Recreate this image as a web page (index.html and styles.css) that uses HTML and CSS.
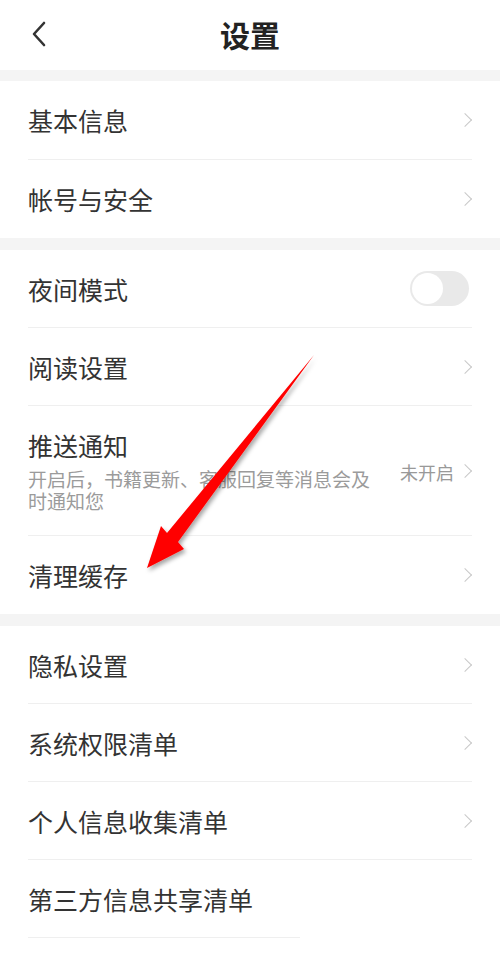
FILE: index.html
```html
<!DOCTYPE html>
<html lang="zh-CN">
<head>
<meta charset="utf-8">
<title>设置</title>
<link rel="stylesheet" href="styles.css">
</head>
<body>
<div class="page">
  <header class="topbar">
    <svg class="back" width="16" height="26" viewBox="0 0 16 26"><path d="M13 2 L3 13 L13 24" fill="none" stroke="#333" stroke-width="2.6" stroke-linecap="round" stroke-linejoin="round"/></svg>
    <h1 class="title">设置</h1>
  </header>

  <div class="gap first"></div>
  <section class="group">
    <div class="row top"><span class="label">基本信息</span><span class="chev"></span></div>
    <div class="row"><span class="label">帐号与安全</span><span class="chev"></span></div>
  </section>

  <div class="gap"></div>
  <section class="group">
    <div class="row"><span class="label">夜间模式</span><span class="toggle"><span class="knob"></span></span></div>
    <div class="row"><span class="label">阅读设置</span><span class="chev"></span></div>
    <div class="row tall">
      <div class="texts">
        <span class="label">推送通知</span>
        <span class="sub">开启后，书籍更新、客服回复等消息会及时通知您</span>
      </div>
      <span class="value">未开启</span><span class="chev"></span>
    </div>
    <div class="row"><span class="label">清理缓存</span><span class="chev"></span></div>
  </section>

  <div class="gap"></div>
  <section class="group">
    <div class="row"><span class="label">隐私设置</span><span class="chev"></span></div>
    <div class="row"><span class="label">系统权限清单</span><span class="chev"></span></div>
    <div class="row"><span class="label">个人信息收集清单</span><span class="chev"></span></div>
    <div class="row last"><span class="label">第三方信息共享清单</span></div>
  </section>

  <svg class="arrow" width="500" height="965" viewBox="0 0 500 965">
    <defs>
      <filter id="sh" x="-20%" y="-20%" width="140%" height="140%">
        <feDropShadow dx="2" dy="3" stdDeviation="2" flood-color="#000" flood-opacity="0.35"/>
      </filter>
    </defs>
    <polygon filter="url(#sh)" fill="#ff0000" points="147,568 161,526 167,533 314,355 178,542 184,549"/>
  </svg>
</div>
</body>
</html>
```

FILE: styles.css
```css
* { box-sizing: border-box; }
html, body { margin: 0; padding: 0; background: #fff; }
body {
  font-family: "Noto Sans CJK SC", "Noto Sans", sans-serif;
  color: #333;
}
.page {
  position: relative;
  width: 500px;
  min-height: 965px;
  background: #fff;
}
.topbar {
  height: 70px;
  display: flex;
  align-items: center;
  justify-content: center;
  position: relative;
}
.back {
  position: absolute;
  left: 31px;
  top: 21px;
}
.title {
  margin: 0;
  font-size: 30px;
  font-weight: 700;
  color: #222;
  line-height: 1;
  margin-top: -3px;
}
.gap {
  height: 12px;
  background: #f4f4f4;
}
.gap.first { height: 11px; }
.group {
  padding: 0 28px;
}
.row {
  display: flex;
  align-items: center;
  min-height: 78px;
  border-bottom: 1px solid #efefef;
}
.row.top { min-height: 79px; }
.group .row:last-child { border-bottom: none; height: 78px; min-height: 78px; }
.group .row.last {
  border-bottom: 1px solid #efefef;
  width: 272px;
  height: 78px;
  min-height: 78px;
  white-space: nowrap;
}
.label {
  font-size: 25px;
  line-height: 30px;
  color: #333;
  flex: 1;
}
.chev {
  width: 10px;
  height: 16px;
  flex: none;
  position: relative;
}
.chev::before {
  content: "";
  position: absolute;
  left: -2px;
  top: 3px;
  width: 9px;
  height: 9px;
  border-top: 1.5px solid #c8c8c8;
  border-right: 1.5px solid #c8c8c8;
  transform: rotate(45deg);
}
.toggle {
  width: 59px;
  height: 35px;
  border-radius: 18px;
  background: #e9e9e9;
  flex: none;
  margin-right: 3px;
  padding: 2px;
  display: flex;
  align-items: center;
}
.knob {
  width: 31px;
  height: 31px;
  border-radius: 50%;
  background: #fff;
}
.row.tall {
  padding: 24px 0 23px;
  align-items: center;
}
.texts {
  flex: 1;
  display: flex;
  flex-direction: column;
}
.texts .label { flex: none; }
.sub {
  margin-top: 8px;
  font-size: 19px;
  line-height: 22px;
  color: #9b9b9b;
  max-width: 345px;
}
.value {
  font-size: 18px;
  line-height: 22px;
  color: #999;
  margin-right: 8px;
  margin-top: 2px;
}
.arrow {
  position: absolute;
  left: 0;
  top: 0;
  pointer-events: none;
}
```
